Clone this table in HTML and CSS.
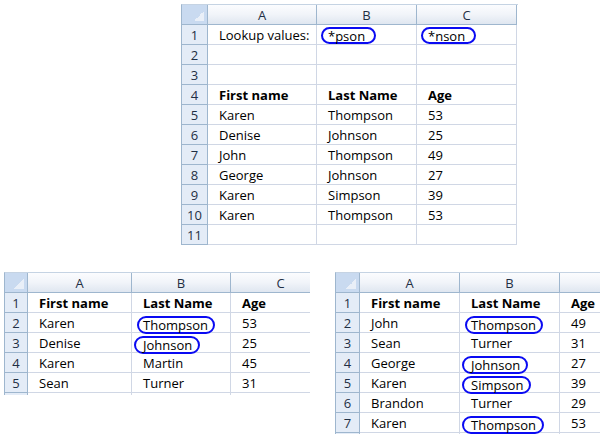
FILE: index.html
```html
<!DOCTYPE html>
<html>
<head>
<meta charset="utf-8">
<link rel="stylesheet" href="styles.css">
</head>
<body>
<div class="page">
  <div class="top-wrap">
    <div class="sheet sheet-top">
      <div class="corner"></div><div class="colhdr">A</div><div class="colhdr">B</div><div class="colhdr">C</div>
      <div class="rowhdr">1</div><div class="cell">Lookup values:</div><div class="cell"><span class="oval o-top">*pson</span></div><div class="cell"><span class="oval o-top">*nson</span></div>
      <div class="rowhdr">2</div><div class="cell"></div><div class="cell"></div><div class="cell"></div>
      <div class="rowhdr">3</div><div class="cell"></div><div class="cell"></div><div class="cell"></div>
      <div class="rowhdr">4</div><div class="cell b">First name</div><div class="cell b">Last Name</div><div class="cell b">Age</div>
      <div class="rowhdr">5</div><div class="cell">Karen</div><div class="cell">Thompson</div><div class="cell">53</div>
      <div class="rowhdr">6</div><div class="cell">Denise</div><div class="cell">Johnson</div><div class="cell">25</div>
      <div class="rowhdr">7</div><div class="cell">John</div><div class="cell">Thompson</div><div class="cell">49</div>
      <div class="rowhdr">8</div><div class="cell">George</div><div class="cell">Johnson</div><div class="cell">27</div>
      <div class="rowhdr">9</div><div class="cell">Karen</div><div class="cell">Simpson</div><div class="cell">39</div>
      <div class="rowhdr">10</div><div class="cell">Karen</div><div class="cell">Thompson</div><div class="cell">53</div>
      <div class="rowhdr">11</div><div class="cell"></div><div class="cell"></div><div class="cell"></div>
    </div>
  </div>
  <div class="bottom-row">
    <div class="clip clip-left">
      <div class="sheet sheet-left">
        <div class="corner"></div><div class="colhdr">A</div><div class="colhdr">B</div><div class="colhdr">C</div>
        <div class="rowhdr">1</div><div class="cell b">First name</div><div class="cell b">Last Name</div><div class="cell b">Age</div>
        <div class="rowhdr">2</div><div class="cell">Karen</div><div class="cell"><span class="oval o-a">Thompson</span></div><div class="cell">53</div>
        <div class="rowhdr">3</div><div class="cell">Denise</div><div class="cell"><span class="oval o-b">Johnson</span></div><div class="cell">25</div>
        <div class="rowhdr">4</div><div class="cell">Karen</div><div class="cell">Martin</div><div class="cell">45</div>
        <div class="rowhdr">5</div><div class="cell">Sean</div><div class="cell">Turner</div><div class="cell">31</div>
        <div class="rowhdr"></div><div class="cell"></div><div class="cell"></div><div class="cell"></div>
      </div>
    </div>
    <div class="clip clip-right">
      <div class="sheet sheet-right">
        <div class="corner"></div><div class="colhdr">A</div><div class="colhdr">B</div><div class="colhdr"></div>
        <div class="rowhdr">1</div><div class="cell b">First name</div><div class="cell b">Last Name</div><div class="cell b">Age</div>
        <div class="rowhdr">2</div><div class="cell">John</div><div class="cell"><span class="oval o-a">Thompson</span></div><div class="cell">49</div>
        <div class="rowhdr">3</div><div class="cell">Sean</div><div class="cell">Turner</div><div class="cell">31</div>
        <div class="rowhdr">4</div><div class="cell">George</div><div class="cell"><span class="oval o-b">Johnson</span></div><div class="cell">27</div>
        <div class="rowhdr">5</div><div class="cell">Karen</div><div class="cell"><span class="oval o-b">Simpson</span></div><div class="cell">39</div>
        <div class="rowhdr">6</div><div class="cell">Brandon</div><div class="cell">Turner</div><div class="cell">29</div>
        <div class="rowhdr">7</div><div class="cell">Karen</div><div class="cell"><span class="oval o-b">Thompson</span></div><div class="cell">53</div>
        <div class="rowhdr"></div><div class="cell"></div><div class="cell"></div><div class="cell"></div>
      </div>
    </div>
  </div>
</div>
</body>
</html>
```

FILE: styles.css
```css
html, body {
  margin: 0;
  padding: 0;
  background: #ffffff;
}
.page {
  width: 606px;
  height: 445px;
  font-family: "Open Sans", "Lato", sans-serif;
  font-size: 13px;
  color: #000;
}
.top-wrap {
  padding: 4px 0 0 181px;
}
.sheet {
  display: grid;
  grid-auto-rows: 20px;
  border-left: 1px solid #9eb6ce;
  border-top: 1px solid #c5d3e3;
}
.sheet-top {
  grid-template-columns: 26px 109px 100px 100px;
  width: 336px;
}
.sheet-left {
  grid-template-columns: 23px 104px 99px 100px;
  width: 327px;
}
.sheet-right {
  grid-template-columns: 24px 100px 100px 100px;
  width: 325px;
}
.bottom-row {
  display: flex;
  margin-top: 27px;
}
.clip {
  overflow: hidden;
}
.clip-left {
  margin-left: 4px;
  width: 306px;
  height: 123px;
}
.clip-right {
  margin-left: 25px;
  width: 265px;
  height: 162px;
}
.corner, .colhdr, .rowhdr, .cell {
  box-sizing: border-box;
  border-right: 1px solid #d0d7e5;
  border-bottom: 1px solid #d0d7e5;
  display: flex;
  align-items: center;
  white-space: nowrap;
}
.corner {
  background:
    linear-gradient(135deg, transparent 50%, #e9eff8 50%) no-repeat right 3px bottom 3px / 10px 10px,
    #c9daf0;
  border-right-color: #9eb6ce;
  border-bottom-color: #9eb6ce;
}
.colhdr {
  justify-content: center;
  background: linear-gradient(#fbfcfe, #f1f4f9 50%, #dfe6f0);
  border-right-color: #9eb6ce;
  border-bottom-color: #9eb6ce;
  color: #1f2f44;
  padding-top: 1px;
}
.rowhdr {
  justify-content: center;
  background: #e4ecf7;
  border-right-color: #9eb6ce;
  border-bottom-color: #9eb6ce;
  color: #1f2f44;
  padding-top: 1px;
}
.cell {
  padding: 1px 0 0 11px;
}
.b {
  font-weight: 700;
}
.oval {
  display: inline-flex;
  align-items: center;
  box-sizing: border-box;
  height: 18px;
  border: 2px solid #0a0af2;
  border-radius: 9px;
  margin-top: 1px;
}
.o-top {
  height: 17px;
  padding: 0 9px 0 5px;
  margin-left: -7px;
}
.o-a {
  padding: 0 5px 0 4px;
  margin-left: -6px;
  margin-top: 3px;
}
.o-b {
  padding: 0 6px 0 7px;
  margin-left: -9px;
  margin-top: 3px;
}
```
